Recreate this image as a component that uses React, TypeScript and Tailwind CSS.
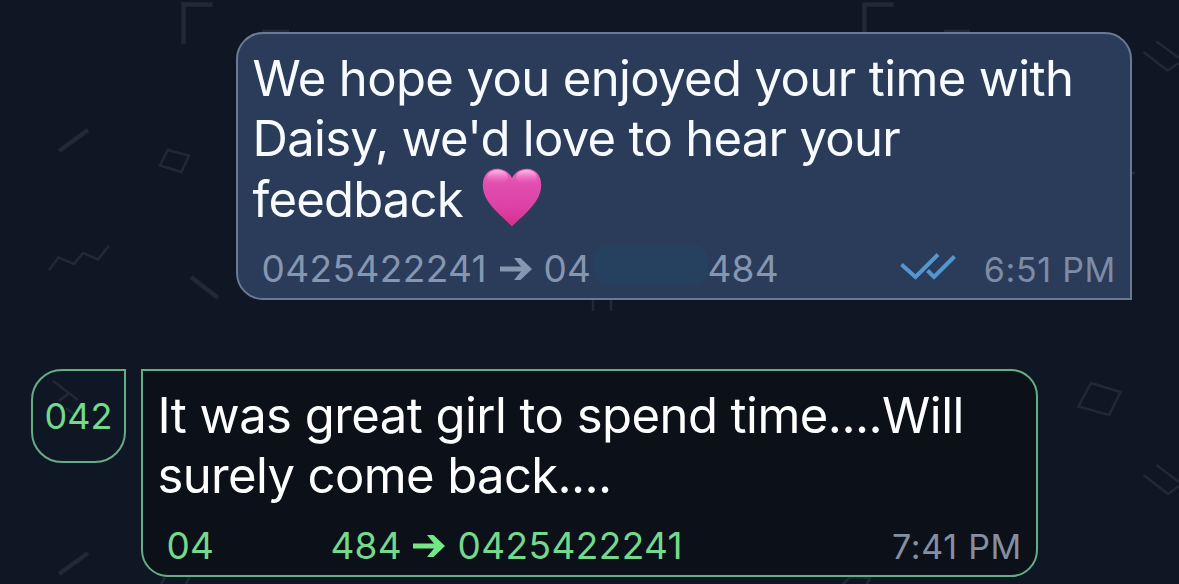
import type { ReactNode } from 'react';

function Arrow({ className }: { className?: string }) {
  return (
    <svg viewBox="0 0 32 24" fill="none" className={className}>
      <path d="M0 12H27" stroke="currentColor" strokeWidth="5" />
      <path d="M14 1H20.500L32 12L20.500 23H14L23 12Z" fill="currentColor" />
    </svg>
  );
}

function DoubleCheck() {
  return (
    <svg viewBox="0 0 56 28" fill="none" stroke="#5596d2" strokeWidth="4" className="mb-[3px] w-[56px] h-[28px] shrink-0">
      <path d="M1.500 11.500L15.500 24L38 1.500" />
      <path d="M27.500 17.500L34 24L54.500 3.500" />
    </svg>
  );
}

function Heart() {
  return (
    <svg viewBox="0 0 60 60" className="mb-0.5 w-[60px] h-[60px] shrink-0">
      <defs>
        <linearGradient id="heart-fill" x1="0" y1="0" x2="0" y2="1">
          <stop offset="0" stopColor="#ee62bd" />
          <stop offset="0.3" stopColor="#e04cae" />
          <stop offset="0.65" stopColor="#dd43a5" />
          <stop offset="1" stopColor="#d92c8c" />
        </linearGradient>
        <linearGradient id="heart-shine" x1="0" y1="0" x2="0" y2="1">
          <stop offset="0" stopColor="#ffc4ea" stopOpacity="0.95" />
          <stop offset="1" stopColor="#ee62bd" stopOpacity="0" />
        </linearGradient>
      </defs>
      <path d="M30 58.500C27 55 20 49.500 13.500 42.500C6 34.500 0.800 27 0.800 17C0.800 7 7 0.800 15 0.800C22 0.800 27 4.500 30 10C33 4.500 38 0.800 45 0.800C53 0.800 59.200 7 59.200 17C59.200 27 54 34.500 46.500 42.500C40 49.500 33 55 30 58.500Z" fill="url(#heart-fill)" />
      <ellipse cx="15.500" cy="9" rx="10.500" ry="7" fill="url(#heart-shine)" />
      <ellipse cx="44.500" cy="9" rx="10.500" ry="7" fill="url(#heart-shine)" />
    </svg>
  );
}

function Wallpaper() {
  return (
    <svg viewBox="0 0 1179 584" fill="none" stroke="#202a37" className="absolute inset-0 w-full h-full">
      <g strokeWidth="4.500">
        <path d="M183.500 44V4.500H212.500" />
        <path d="M864.500 44V4.500H893.500" />
        <path d="M59 151L88 130" />
        <path d="M59 574L88 553" />
        <path d="M191 277L218 298" />
      </g>
      <g strokeWidth="2.500">
        <path d="M49 270L58.500 257.500L74 264L83 253L98 259.500L109 245.500" />
        <path d="M167.500 150L189 155.500L181.500 172L160 165.500Z" />
        <path d="M1091 383L1120.500 392L1109 415L1078.500 406.500Z" />
        <path d="M1156.500 41.500L1179 58M1143.500 52L1167.500 70.500L1179 63" />
        <path d="M1156.500 465L1179 482M1143.500 475L1168 494L1179 486" />
        <path d="M53 381L78 400M69 393L59 401M66 408L76 416" />
        <path d="M593 298V311M611 298V311" />
        <path d="M161 584L166 576M186 584L190 576" />
        <path d="M843 584L850 577L870 578L867 584" />
        <path d="M262 31H289M944 31H970M1130 173H1135" />
      </g>
    </svg>
  );
}

function Line({ children, className }: { children: ReactNode; className: string }) {
  return <p className={`flex h-[60px] items-center whitespace-pre ${className}`}>{children}</p>;
}

function SentMessage() {
  return (
    <div className="ml-[236px] w-[896px] h-[268px] rounded-[27px] rounded-br-none border-2 border-[#6a7a94] bg-[#2a3c5a] pl-[14.5px] pr-[14px] pt-[15px]">
      <div className="text-[49px] leading-[60px] text-[#f7fbff]">
        <Line className="tracking-[-0.61px]">We hope you enjoyed your time with</Line>
        <Line className="tracking-[-0.7px]">Daisy, we'd love to hear your</Line>
        <Line className="tracking-[-0.8px]">
          <span className="w-[229px] pt-0.5">feedback</span>
          <Heart />
        </Line>
      </div>
      <div className="flex h-[60px] items-center pl-[9px] pt-[19px] text-[37px] text-[#8596b0] whitespace-nowrap">
        <span className="w-[238px] tracking-[0.4px]">0425422241</span>
        <Arrow className="w-[32px] h-[24px] shrink-0" />
        <span className="w-[64px] pl-3 tracking-[0.2px]">04</span>
        <span className="ml-[-2px] mb-2 h-10 w-[114px] rounded-[14px] bg-[#26405f]" />
        <span className="w-[192px] tracking-[0.2px]">484</span>
        <DoubleCheck />
        <span className="ml-auto pt-0.5 text-[34px] tracking-[0.7px] text-[#7d8ca6]">6:51 PM</span>
      </div>
    </div>
  );
}

function ReceivedMessage() {
  return (
    <div className="flex items-start pl-[31px]">
      <div className="flex w-[95px] h-[94px] items-center justify-center rounded-[31px] rounded-tr-none border-2 border-[#66ad83] text-[36px] text-[#74d88d]">
        042
      </div>
      <div className="ml-[15px] w-[897px] h-[208px] rounded-[27px] rounded-tl-none border-2 border-[#66ad83] bg-[#0c1119] pl-[14.5px] pr-[14px] pt-[15px]">
        <div className="text-[49px] leading-[60px] text-white">
          <Line className="tracking-[-0.54px]">It was great girl to spend time....Will</Line>
          <Line className="tracking-[-0.62px]">surely come back....</Line>
        </div>
        <div className="flex h-[60px] items-center pl-[9px] pt-[20px] text-[37px] text-[#74d88d] whitespace-nowrap">
          <span className="w-[164px] tracking-[0.2px]">04</span>
          <span className="w-[82px] tracking-[0.2px]">484</span>
          <Arrow className="w-[32px] h-[24px] shrink-0 text-[#72e886]" />
          <span className="pl-[13px] tracking-[0.4px]">0425422241</span>
          <span className="ml-auto text-[34px] tracking-[0.7px] text-[#8490a2]">7:41 PM</span>
        </div>
      </div>
    </div>
  );
}

export default function App() {
  return (
    <main className="relative h-[584px] w-[1179px] overflow-hidden bg-[#0f1724] font-['Inter',sans-serif]">
      <Wallpaper />
      <div className="relative flex flex-col gap-[69px] pt-[32px]">
        <SentMessage />
        <ReceivedMessage />
      </div>
    </main>
  );
}
